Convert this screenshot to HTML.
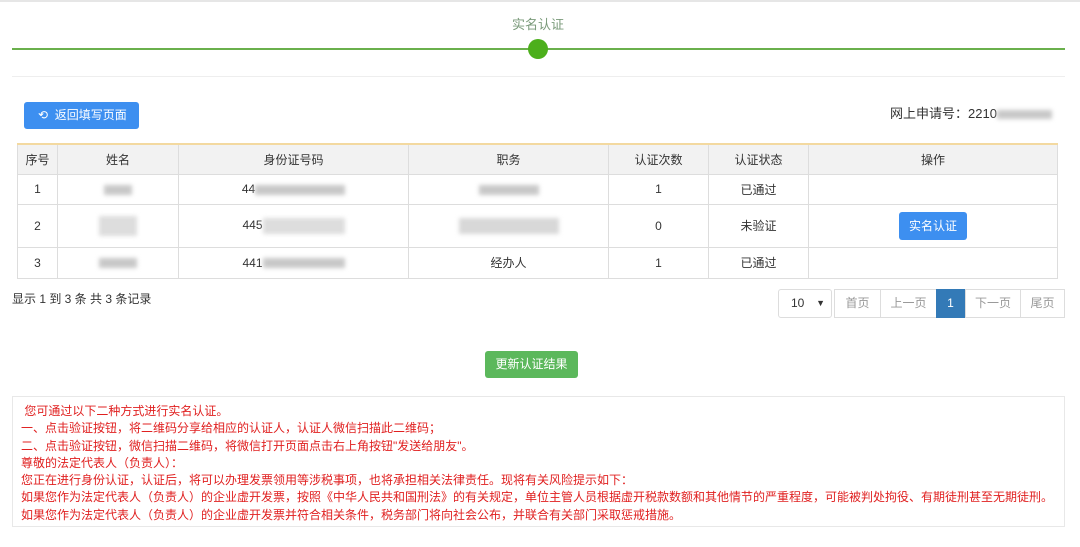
<!DOCTYPE html>
<html><head><meta charset="utf-8"><style>
*{margin:0;padding:0;box-sizing:border-box}
body{width:1080px;height:547px;background:#fff;font-family:"Liberation Sans","Noto Sans CJK SC",sans-serif;font-size:12px;color:#333;position:relative;overflow:hidden}
.a{position:absolute}
table{position:absolute;left:17px;top:143px;width:1041px;border-collapse:collapse;border-top:2px solid #f3d9a0}
td,th{border:1px solid #ddd;text-align:center;font-weight:normal;font-size:12px;color:#333}
th{background:#f2f2f2;height:30px}
.bl{display:inline-block;background:#c8c8c8;filter:blur(2px);height:10px;vertical-align:middle}
.pg{position:absolute;top:289px;height:29px;border:1px solid #ddd;color:#999;text-align:center;line-height:27px;font-size:12px}
.red{color:#e02020;font-size:12px;line-height:17.3px}
</style></head><body>
<div class="a" style="left:0;top:0;width:1080px;height:2px;background:#e6e6e6"></div>
<div class="a" style="left:0;top:14px;width:1080px;text-align:center;color:#7a9a7a;font-size:13px;transform:translateX(-2px)">实名认证</div>
<div class="a" style="left:12px;top:48px;width:1053px;height:2px;background:#6ab04c"></div>
<div class="a" style="left:528px;top:39px;width:20px;height:20px;border-radius:50%;background:#4caf1c"></div>
<div class="a" style="left:12px;top:76px;width:1053px;height:1px;background:#eee"></div>
<div class="a" style="left:24px;top:102px;width:115px;height:27px;background:#3d8ff0;border-radius:3px;color:#fff;line-height:27px;font-size:12px;padding-left:14px">⟲&nbsp; 返回填写页面</div>
<div class="a" style="left:890px;top:103px;font-size:13px;color:#333">网上申请号：2210<span class="bl" style="width:55px;height:9px"></span></div>
<table>
<tr><th style="width:40px">序号</th><th style="width:121px">姓名</th><th style="width:230px">身份证号码</th><th style="width:200px">职务</th><th style="width:100px">认证次数</th><th style="width:100px">认证状态</th><th>操作</th></tr>
<tr style="height:30px"><td>1</td><td><span class="bl" style="width:28px"></span></td><td>44<span class="bl" style="width:90px"></span></td><td><span class="bl" style="width:60px"></span></td><td>1</td><td>已通过</td><td></td></tr>
<tr style="height:43px"><td>2</td><td><span class="bl" style="width:38px;height:20px;background:#ddd"></span></td><td>445<span class="bl" style="width:82px;height:16px;background:#ddd"></span></td><td><span class="bl" style="width:100px;height:16px;background:#d8d8d8"></span></td><td>0</td><td>未验证</td><td><span style="display:inline-block;background:#3d8ff0;color:#fff;width:68px;height:28px;line-height:28px;border-radius:3px">实名认证</span></td></tr>
<tr style="height:31px"><td>3</td><td><span class="bl" style="width:38px"></span></td><td>441<span class="bl" style="width:82px"></span></td><td>经办人</td><td>1</td><td>已通过</td><td></td></tr>
</table>
<div class="a" style="left:12px;top:290px;font-size:12px;color:#333">显示 1 到 3 条 共 3 条记录</div>
<div class="pg" style="left:778px;width:54px;color:#333;text-align:left;padding-left:12px;border-radius:3px">10 <span style="position:absolute;right:6px;font-size:9px">▼</span></div>
<div class="pg" style="left:834px;width:47px">首页</div>
<div class="pg" style="left:880px;width:57px">上一页</div>
<div class="pg" style="left:936px;width:29px;background:#337ab7;border-color:#337ab7;color:#fff">1</div>
<div class="pg" style="left:965px;width:56px">下一页</div>
<div class="pg" style="left:1020px;width:45px">尾页</div>
<div class="a" style="left:485px;top:351px;width:93px;height:27px;background:#5cb85c;border-radius:3px;color:#fff;text-align:center;line-height:27px">更新认证结果</div>
<div class="a red" style="left:12px;top:396px;width:1053px;height:131px;border:1px solid #e8e8e8;padding:6px 0 0 8px">
<div>&nbsp;您可通过以下二种方式进行实名认证。</div>
<div>一、点击验证按钮，将二维码分享给相应的认证人，认证人微信扫描此二维码；</div>
<div>二、点击验证按钮，微信扫描二维码，将微信打开页面点击右上角按钮"发送给朋友"。</div>
<div>尊敬的法定代表人（负责人）：</div>
<div>您正在进行身份认证，认证后，将可以办理发票领用等涉税事项，也将承担相关法律责任。现将有关风险提示如下：</div>
<div>如果您作为法定代表人（负责人）的企业虚开发票，按照《中华人民共和国刑法》的有关规定，单位主管人员根据虚开税款数额和其他情节的严重程度，可能被判处拘役、有期徒刑甚至无期徒刑。</div>
<div>如果您作为法定代表人（负责人）的企业虚开发票并符合相关条件，税务部门将向社会公布，并联合有关部门采取惩戒措施。</div>
</div>
</body></html>
